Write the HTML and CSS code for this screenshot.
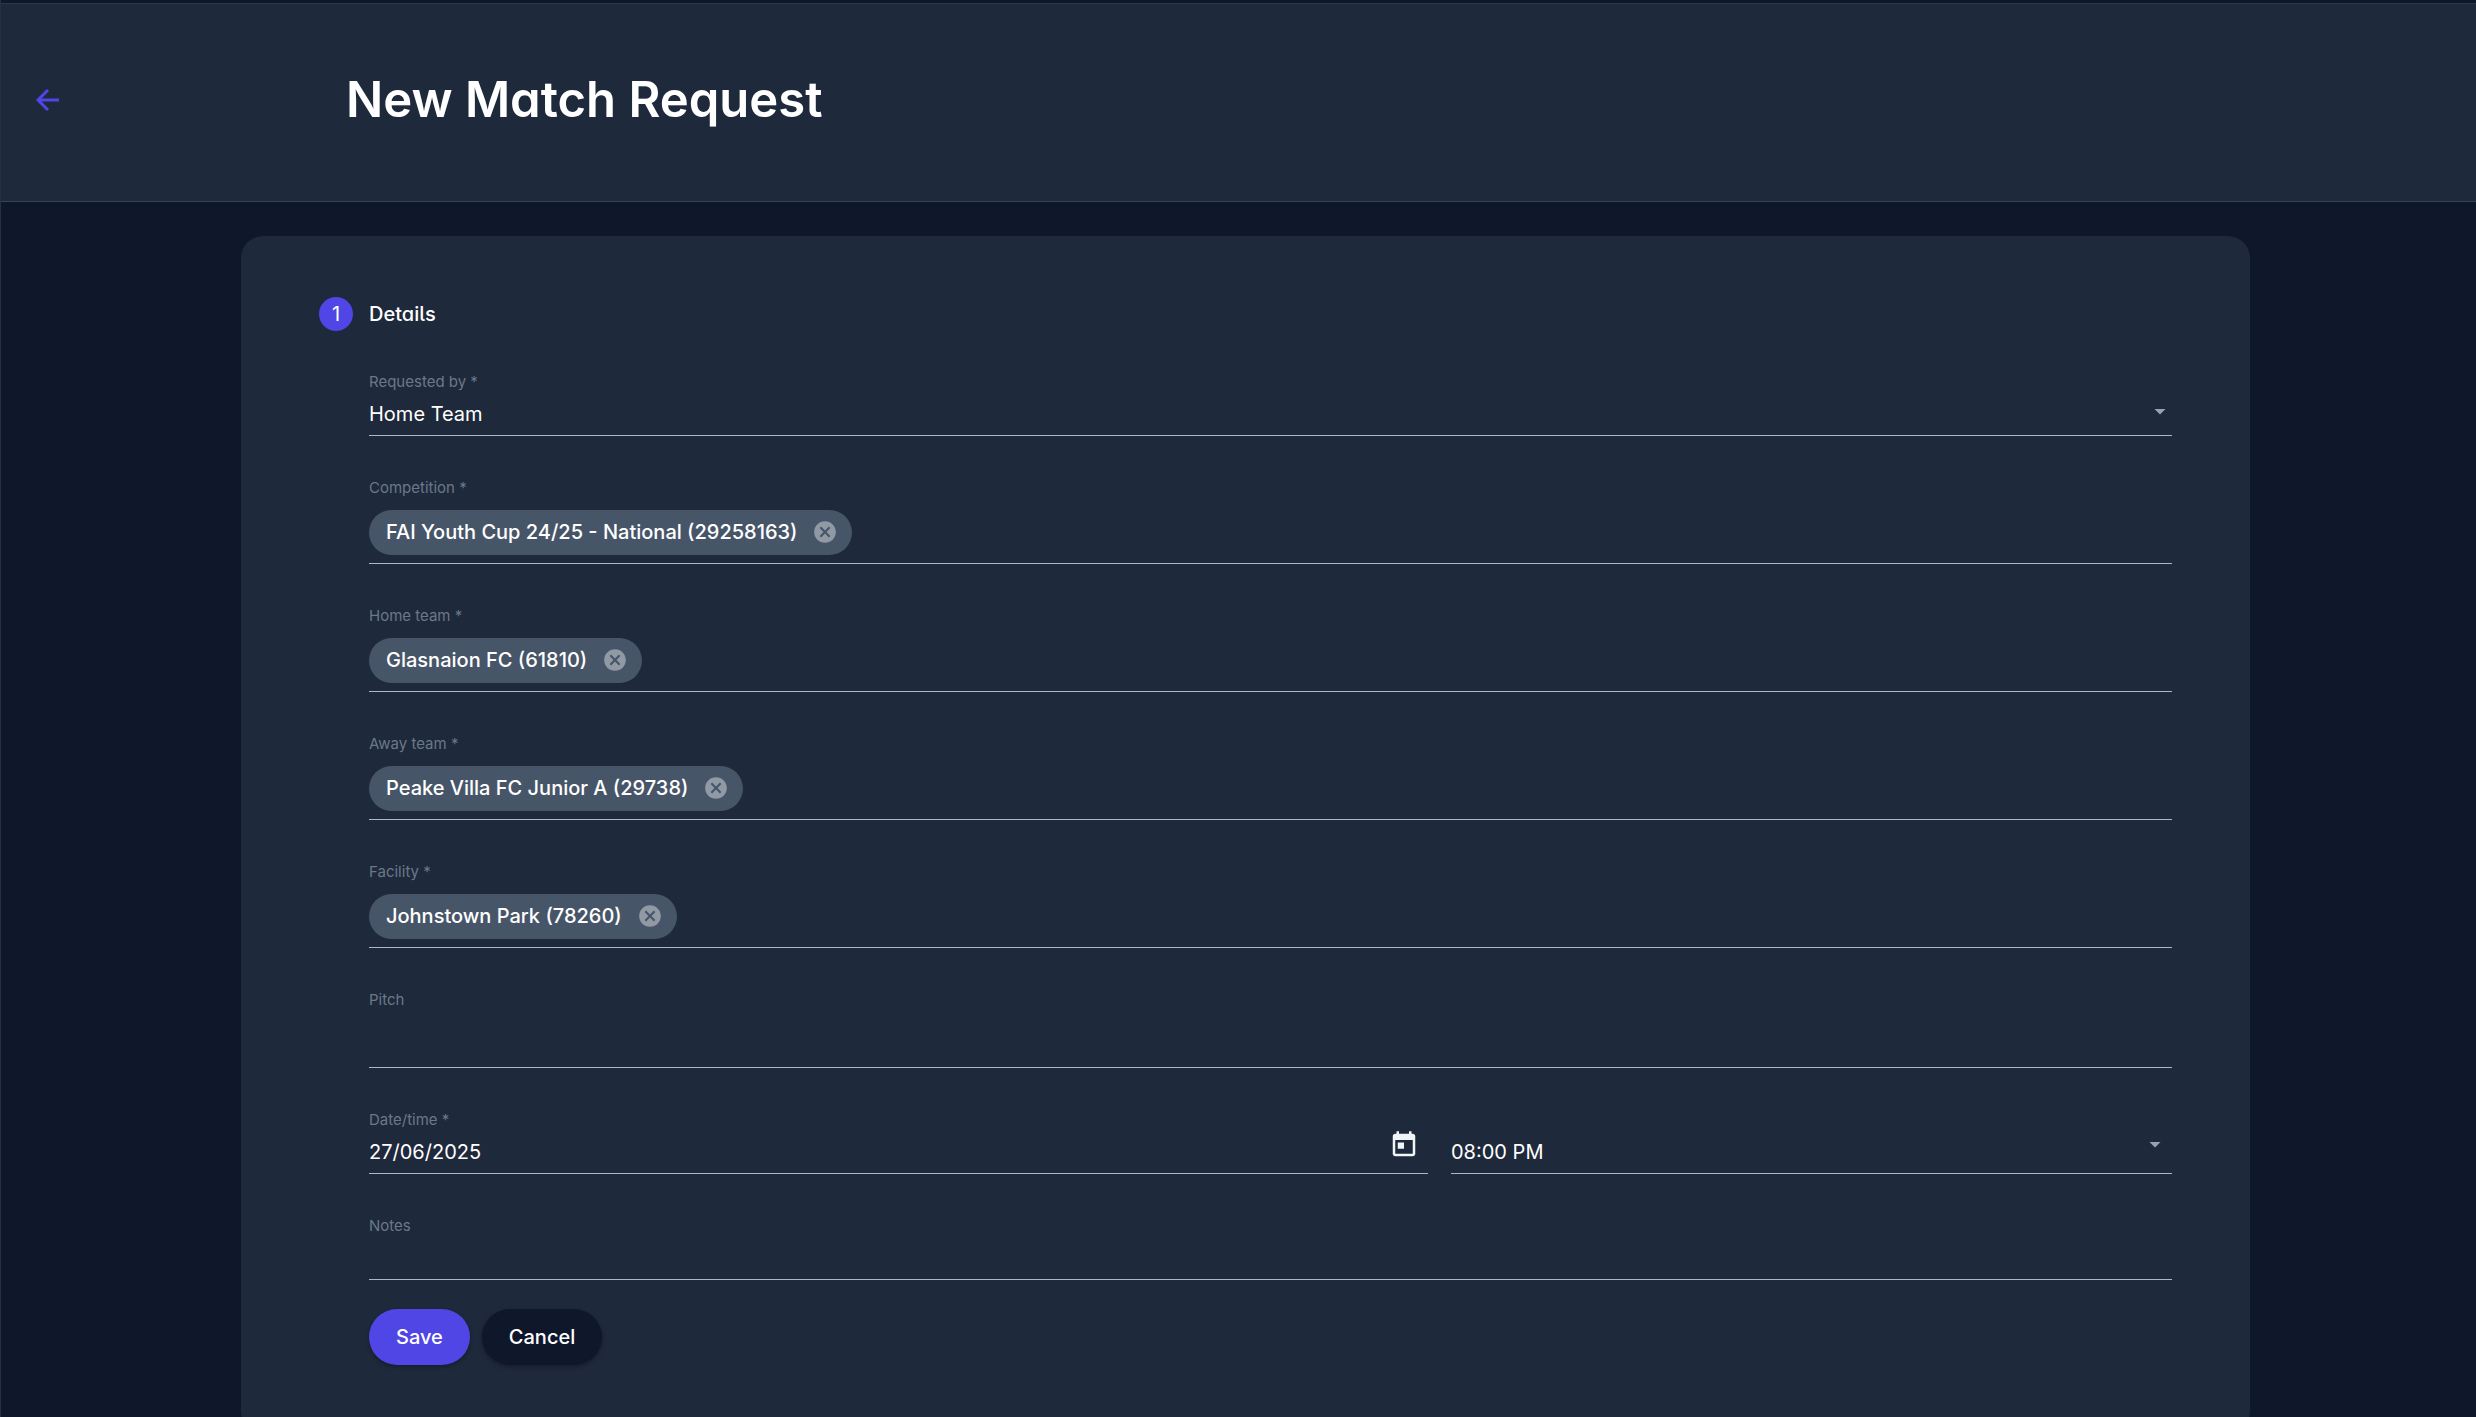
FILE: index.html
```html
<!DOCTYPE html>
<html lang="en">
<head>
<meta charset="utf-8">
<meta name="viewport" content="width=device-width, initial-scale=1">
<title>New Match Request</title>
<link rel="stylesheet" href="styles.css">
</head>
<body>
<svg class="sprite" aria-hidden="true">
  <symbol id="cancel" viewBox="0 0 24 24"><path d="M12 2C6.470 2 2 6.470 2 12s4.470 10 10 10 10-4.470 10-10S17.530 2 12 2zm5 13.590L15.590 17 12 13.410 8.410 17 7 15.590 10.590 12 7 8.410 8.410 7 12 10.590 15.590 7 17 8.410 13.410 12 17 15.590z"/></symbol>
</svg>
<div class="app">
  <header class="header">
    <a class="back" href="#" aria-label="Back">
      <svg viewBox="0 0 28 28" aria-hidden="true"><path d="M13 4L3 14l10 10M3 14h21"/></svg>
    </a>
    <h1 class="title">New Match Request</h1>
  </header>
  <main class="main">
    <form class="card">
      <div class="step">
        <span class="step-number">1</span>
        <h2 class="step-title">Details</h2>
      </div>
      <div class="fields">
        <div class="field">
          <label class="label" for="requested">Requested by *</label>
          <div class="control">
            <select class="input" id="requested"><option>Home Team</option></select>
            <span class="caret"></span>
          </div>
        </div>
        <div class="field">
          <label class="label" for="competition">Competition *</label>
          <div class="chips">
            <span class="chip">FAI Youth Cup 24/25 - National (29258163)
              <button class="remove" type="button" aria-label="Remove"><svg aria-hidden="true"><use href="#cancel"/></svg></button></span>
            <input class="input" id="competition" type="text">
          </div>
        </div>
        <div class="field">
          <label class="label" for="home">Home team *</label>
          <div class="chips">
            <span class="chip">Glasnaion FC (61810)
              <button class="remove" type="button" aria-label="Remove"><svg aria-hidden="true"><use href="#cancel"/></svg></button></span>
            <input class="input" id="home" type="text">
          </div>
        </div>
        <div class="field">
          <label class="label" for="away">Away team *</label>
          <div class="chips">
            <span class="chip">Peake Villa FC Junior A (29738)
              <button class="remove" type="button" aria-label="Remove"><svg aria-hidden="true"><use href="#cancel"/></svg></button></span>
            <input class="input" id="away" type="text">
          </div>
        </div>
        <div class="field">
          <label class="label" for="facility">Facility *</label>
          <div class="chips">
            <span class="chip">Johnstown Park (78260)
              <button class="remove" type="button" aria-label="Remove"><svg aria-hidden="true"><use href="#cancel"/></svg></button></span>
            <input class="input" id="facility" type="text">
          </div>
        </div>
        <div class="field">
          <label class="label" for="pitch">Pitch</label>
          <div class="control control-tall"><input class="input" id="pitch" type="text"></div>
        </div>
        <div class="datetime">
          <div class="field">
            <label class="label" for="date">Date/time *</label>
            <div class="control">
              <input class="input" id="date" type="text" value="27/06/2025">
              <button class="calendar" type="button" aria-label="Open calendar"><svg viewBox="0 0 24 24" aria-hidden="true"><path d="M19 3h-1V1h-2v2H8V1H6v2H5c-1.110 0-1.990.9-1.990 2L3 19c0 1.100.89 2 2 2h14c1.100 0 2-.9 2-2V5c0-1.100-.9-2-2-2zm0 16H5V8h14v11zM7 10h5v5H7z"/></svg></button>
            </div>
          </div>
          <div class="field field-time">
            <div class="control">
              <select class="input" aria-label="Time"><option>08:00 PM</option></select>
              <span class="caret caret-time"></span>
            </div>
          </div>
        </div>
        <div class="field">
          <label class="label" for="notes">Notes</label>
          <div class="control"><input class="input" id="notes" type="text"></div>
        </div>
      </div>
      <div class="actions">
        <button class="button button-primary" type="submit">Save</button>
        <button class="button" type="button">Cancel</button>
      </div>
    </form>
  </main>
</div>
</body>
</html>
```
FILE: styles.css
```css
*, *::before, *::after { box-sizing: border-box; }

body {
  margin: 0;
  background: #0f172a;
  color: #fff;
  font: 400 20px/28px Inter, "Liberation Sans", sans-serif;
}

button, input, select { font: inherit; color: inherit; }
button { border: 0; cursor: pointer; }

.sprite { display: none; }

.app {
  display: flex;
  flex-direction: column;
  height: 100vh;
  padding-top: 3px;
  border-left: 1px solid #253044;
}

.header {
  display: flex;
  align-items: center;
  flex: none;
  padding: 62px 34px 68px;
  background: #1e293b;
  border-top: 1px solid #2c384a;
  border-bottom: 1px solid #374355;
}

.back { display: flex; width: 311px; }
.back svg {
  width: 28px;
  height: 28px;
  fill: none;
  stroke: #4f46e5;
  stroke-width: 3;
}

.title {
  margin: 0;
  font-size: 49px;
  font-weight: 600;
  line-height: 67px;
  font-feature-settings: "cv11";
}

.main {
  flex: 1;
  min-height: 0;
  padding: 34px 226px 34px 240px;
  overflow-y: auto;
  scrollbar-width: none;
}

.card {
  padding: 61px 78px 68px;
  border-radius: 22px;
  background: #1e293b;
}

.step { display: flex; align-items: center; gap: 16px; }
.step-number {
  display: grid;
  place-items: center;
  width: 34px;
  height: 34px;
  border-radius: 50%;
  background: #4f46e5;
}
.step-title {
  margin: 0;
  font-size: 20px;
  font-weight: 500;
  font-feature-settings: "cv05", "cv11";
}

.fields {
  display: flex;
  flex-direction: column;
  gap: 40px;
  margin: 39px 0 0 50px;
}

.field { display: flex; flex-direction: column; min-width: 0; }
.label { color: #6b788a; font-size: 15px; line-height: 24px; }

.control, .chips {
  display: flex;
  align-items: center;
  border-bottom: 1px solid #a9b8c4;
}
.control { height: 42px; padding-bottom: 2px; }
.control-tall { height: 56px; }
.chips { padding: 10px 0 8px; gap: 12px; }

.input {
  flex: 1;
  min-width: 0;
  height: 38px;
  padding: 0;
  border: 0;
  outline: 0;
  background: none;
  appearance: none;
}

.caret {
  width: 12px;
  height: 6px;
  margin: 0 6px 4px 0;
  background: #94a3b8;
  clip-path: polygon(0 0, 100% 0, 50% 100%);
}
.caret-time { margin: 0 11px 14px 0; }

.chip {
  display: flex;
  align-items: center;
  gap: 15px;
  height: 45px;
  padding: 0 14px 2px 17px;
  border-radius: 23px;
  background: #475569;
  font-weight: 500;
}
.remove { display: flex; padding: 0; background: none; }
.remove svg { width: 26px; height: 26px; fill: #9199a5; }

.datetime { display: grid; grid-template-columns: 1059fr 721fr; gap: 23px; }
.field-time { justify-content: flex-end; }

.calendar { display: flex; padding: 0; margin: 0 9px 14px 0; background: none; }
.calendar svg { width: 30px; height: 30px; fill: #f1f5f9; }

.actions { display: flex; gap: 12px; margin: 29px 0 0 50px; }
.button {
  height: 56px;
  padding: 0 27px;
  border-radius: 28px;
  background: #0f172a;
  font-weight: 500;
  box-shadow: 0 2px 4px rgba(0, 0, 0, .3);
}
.button-primary { background: #4f46e5; }
```
